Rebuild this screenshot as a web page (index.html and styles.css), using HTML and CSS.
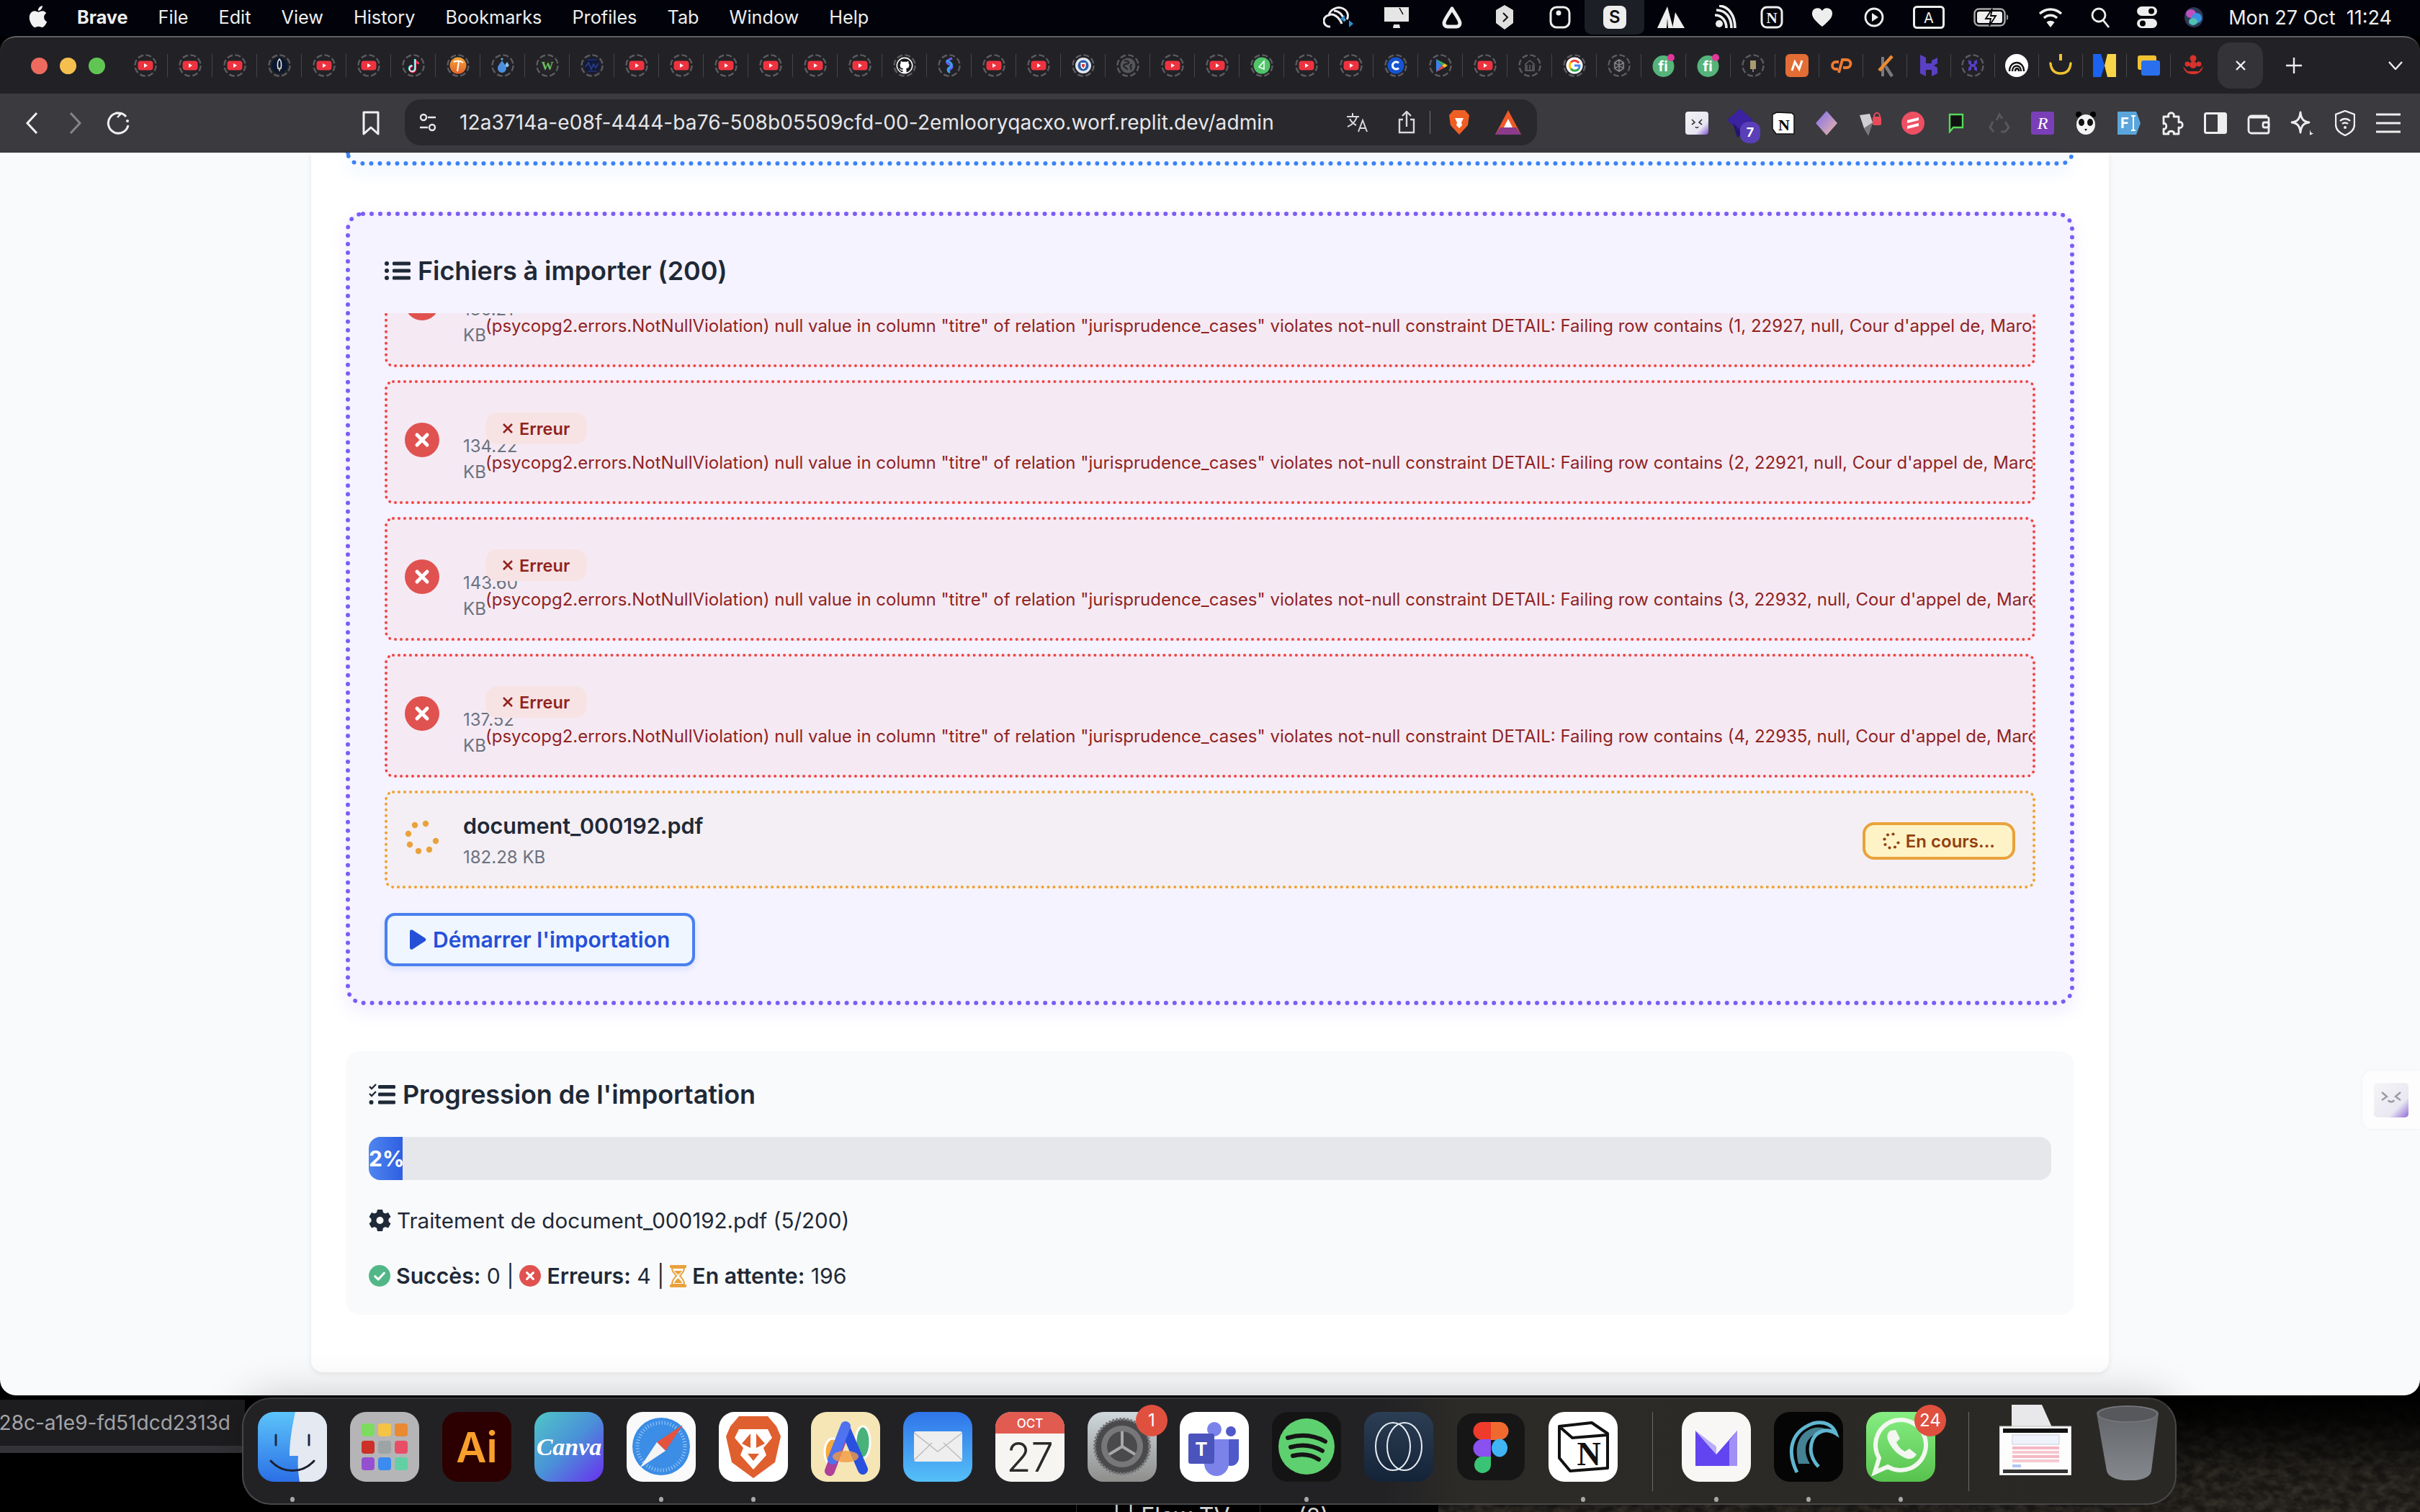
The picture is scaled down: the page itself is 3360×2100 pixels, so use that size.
FILE: index.html
```html
<!DOCTYPE html>
<html lang="fr">

<head>
    <meta charset="UTF-8">
    <title>Admin - Importation</title>
    <link rel="stylesheet" href="styles.css">
</head>

<body>
    <!-- shared icons -->
    <svg class="defs" aria-hidden="true">
        <defs>
            <linearGradient id="g-finder" x1="0" y1="0" x2="0" y2="1"><stop offset="0" stop-color="#5cc4fa"/><stop offset="1" stop-color="#2b6fe6"/></linearGradient>
            <linearGradient id="g-canva" x1="0" y1="0" x2="1" y2="1"><stop offset="0" stop-color="#4fc6c8"/><stop offset=".5" stop-color="#4a90d8"/><stop offset="1" stop-color="#6a2ff0"/></linearGradient>
            <linearGradient id="g-mail" x1="0" y1="0" x2="0" y2="1"><stop offset="0" stop-color="#2f75ea"/><stop offset="1" stop-color="#55c0f8"/></linearGradient>
            <linearGradient id="g-gear" x1="0" y1="0" x2="0" y2="1"><stop offset="0" stop-color="#cfd8dc"/><stop offset="1" stop-color="#8e8e8c"/></linearGradient>
            <linearGradient id="g-navy" x1="0" y1="0" x2="0" y2="1"><stop offset="0" stop-color="#2c3e54"/><stop offset="1" stop-color="#142338"/></linearGradient>
            <linearGradient id="g-wa" x1="0" y1="0" x2="0" y2="1"><stop offset="0" stop-color="#86ee82"/><stop offset="1" stop-color="#58c24e"/></linearGradient>
            <linearGradient id="g-tile" x1="0" y1="0" x2="1" y2="1"><stop offset="0" stop-color="#f4f4f6"/><stop offset=".7" stop-color="#e6e4f0"/><stop offset="1" stop-color="#7d4fd0"/></linearGradient>
            <linearGradient id="g-crystal" x1="0" y1="0" x2="1" y2="1"><stop offset="0" stop-color="#7b6cf2"/><stop offset="1" stop-color="#f0b8a0"/></linearGradient>
            <linearGradient id="g-trash" x1="0" y1="0" x2="0" y2="1"><stop offset="0" stop-color="#5f6266"/><stop offset="1" stop-color="#85888c"/></linearGradient>
            <linearGradient id="g-pick" x1="0" y1="0" x2="0" y2="1"><stop offset="0" stop-color="#f2a63a"/><stop offset="1" stop-color="#e4622a"/></linearGradient>
            <linearGradient id="g-fade" x1="0" y1="0" x2="0" y2="1"><stop offset="0" stop-color="#000"/><stop offset=".2" stop-color="#000" stop-opacity=".85"/><stop offset=".7" stop-color="#000" stop-opacity=".1"/><stop offset="1" stop-color="#000" stop-opacity="0"/></linearGradient>

            <filter id="rock" x="0" y="0" width="100%" height="100%" color-interpolation-filters="sRGB">
                <feTurbulence type="fractalNoise" baseFrequency=".06 .09" numOctaves="5" seed="7"/>
                <feColorMatrix values="0 0 0 0 .24  0 0 0 0 .22  0 0 0 0 .19  1.6 0 0 0 -.5"/>
            </filter>

            <symbol id="ring" viewBox="0 0 32 32"><circle cx="16" cy="16" r="14.6" fill="none" stroke="#5c5c60" stroke-width="2.4" stroke-dasharray="8 3.46"/></symbol>
            <symbol id="yt" viewBox="0 0 32 32"><rect x="5.5" y="9.5" width="21" height="13" rx="4" fill="#ee3340"/><path d="M14 13l5 3-5 3z" fill="#fff"/></symbol>
            <symbol id="rocket" viewBox="0 0 32 32"><circle cx="16" cy="16" r="11" fill="#0b1730"/><path d="M16 7c3 3 3 8 2 13h-4c-1-5-1-10 2-13z" fill="none" stroke="#e8e8e8" stroke-width="1.6"/><path d="M14.5 21h3l-1.5 4z" fill="#e0b050"/></symbol>
            <symbol id="tiktok" viewBox="0 0 32 32"><path d="M18 7v13a4 4 0 1 1-4-4M18 7c.5 3 2.5 5 5 5" fill="none" stroke="#25f4ee" stroke-width="2.4"/><path d="M19 8v13a4 4 0 1 1-4-4M19 8c.5 3 2.5 5 5 5" fill="none" stroke="#fe2c55" stroke-width="2.4"/><path d="M18.5 7.5v13a4 4 0 1 1-4-4" fill="none" stroke="#fff" stroke-width="1.4"/></symbol>
            <symbol id="pick" viewBox="0 0 32 32"><circle cx="16" cy="16" r="11.5" fill="url(#g-pick)"/><path d="M10 11c4-2 9-2 13 1M17 10l-2 14" fill="none" stroke="#fff" stroke-width="2"/></symbol>
            <symbol id="drops" viewBox="0 0 32 32"><path d="M15 9c3 5 6 7 6 11a6 6 0 0 1-12 0c0-4 3-6 6-11z" fill="#4a90e0"/><circle cx="15" cy="7" r="1.6" fill="#6aa8e8"/><path d="M22 11c1 2 2.5 3 2.5 4.5a2.5 2.5 0 0 1-5 0c0-1.5 1.500-2.500 2.500-4.500z" fill="#8cc0ee"/></symbol>
            <symbol id="wcircle" viewBox="0 0 32 32"><circle cx="16" cy="16" r="11" fill="#26262a"/><text x="16" y="22" text-anchor="middle" font-family="Liberation Serif" font-size="17" font-weight="700" fill="#6cbf5c">W</text></symbol>
            <symbol id="wave" viewBox="0 0 32 32"><circle cx="16" cy="16" r="11" fill="#121a3a"/><path d="M7 18l4-6 4 9 3-7 3 5 4-6" fill="none" stroke="#2c3f8c" stroke-width="1.6"/><path d="M10 8h12M10 24h12" stroke="#2c3f8c" stroke-width="1.2"/></symbol>
            <symbol id="octo" viewBox="-4 -4 24 24"><circle cx="8" cy="8" r="8.6" fill="#fff"/><path d="M8 .6C3.900.6.600 3.900.600 8c0 3.300 2.100 6 5 7 .4.100.5-.2.500-.4v-1.400c-2 .4-2.500-.5-2.600-.9-.1-.2-.4-.9-.8-1-.3-.2-.7-.5 0-.5.600 0 1 .5 1.200.8.700 1.100 1.700.8 2.200.6.100-.5.300-.8.500-1-1.700-.2-3.400-.8-3.400-3.700 0-.8.300-1.500.8-2-.1-.2-.3-1 .1-2 0 0 .6-.2 2 .8.600-.2 1.200-.3 1.900-.3s1.300.100 1.900.3c1.400-1 2-.8 2-.8.400 1 .2 1.800.1 2 .5.500.8 1.200.8 2 0 2.900-1.700 3.500-3.400 3.700.3.200.5.700.5 1.400v2c0 .2.100.5.500.4 2.900-1 5-3.700 5-7C15.400 3.900 12.100.6 8 .6z" fill="#1a1a1e"/></symbol>
            <symbol id="spiral" viewBox="0 0 32 32"><path d="M20 6c-8 3-10 6-3 9 5 2 3 5-3 8" fill="none" stroke="#6a5cf0" stroke-width="3.4"/><path d="M12 9c8 3 10 7 4 10-3 2-3 4 1 7" fill="none" stroke="#35a8ee" stroke-width="2.8"/></symbol>
            <symbol id="shield" viewBox="0 0 32 32"><circle cx="16" cy="16" r="11" fill="#dfe6ee"/><circle cx="16" cy="16" r="7.5" fill="#2a5ca8"/><path d="M12.500 12h7v5c0 2-2 3.500-3.500 4-1.500-.5-3.500-2-3.500-4z" fill="#fff"/><path d="M14 14h4v3l-2 2.500-2-2.500z" fill="#d83a3a"/></symbol>
            <symbol id="globe" viewBox="0 0 32 32"><circle cx="16" cy="16" r="10.5" fill="#55565a"/><path d="M11 9c2 1 5 0 6 2s-2 3-4 3-4 2-2 4 4 1 4 4M22 15c-2 0-3 1-2 3s0 4 1 4" fill="none" stroke="#28282c" stroke-width="2.4"/></symbol>
            <symbol id="greenc" viewBox="0 0 32 32"><circle cx="16" cy="16" r="11.5" fill="#4fc468"/><path d="M19 10l-7 8 7 3z" fill="none" stroke="#fff" stroke-width="1.5"/></symbol>
            <symbol id="cblue" viewBox="0 0 32 32"><circle cx="16" cy="16" r="11.5" fill="#1654d0"/><path d="M20 12.500a5 5 0 1 0 0 7" fill="none" stroke="#fff" stroke-width="3"/></symbol>
            <symbol id="gplay" viewBox="0 0 32 32"><path d="M10 7l8 9-8 9z" fill="#3b82f0"/><path d="M10 7l11.500 6-3.500 3z" fill="#38b060"/><path d="M10 25l11.500-6-3.500-3z" fill="#e04848"/><path d="M21.500 13l4.500 3-4.500 3-3.500-3z" fill="#f5c030"/></symbol>
            <symbol id="temple" viewBox="0 0 32 32"><path d="M10 23h12v-9l-6-5-6 5zM12 15v7M16 15v7M20 15v7" fill="none" stroke="#6a6a6e" stroke-width="1.3"/></symbol>
            <symbol id="goog" viewBox="0 0 32 32"><circle cx="16" cy="16" r="11.5" fill="#fff"/><path d="M22 12.500a7 7 0 0 0-11-1" fill="none" stroke="#ea4335" stroke-width="3"/><path d="M11 11.500a7 7 0 0 0 0 9" fill="none" stroke="#fbbc05" stroke-width="3"/><path d="M11 20.500a7 7 0 0 0 11 0" fill="none" stroke="#34a853" stroke-width="3"/><path d="M22 20.500c1-1.500 1.200-3 1-4.500h-7" fill="none" stroke="#4285f4" stroke-width="3"/></symbol>
            <symbol id="knot" viewBox="0 0 32 32"><circle cx="16" cy="16" r="10" fill="#2b2b2f"/><path d="M16 8l6 4v8l-6 4-6-4v-8zM10 12l12 8M22 12l-12 8M16 8v16" fill="none" stroke="#8a8a8e" stroke-width="1.5"/></symbol>
            <symbol id="fiver" viewBox="0 0 32 32"><ellipse cx="15.5" cy="17" rx="15" ry="15" fill="#55b47a"/><text x="15" y="24" text-anchor="middle" font-family="Inter" font-size="20" font-weight="700" fill="#fff">fi</text><circle cx="26" cy="5" r="5" fill="#e0389a"/></symbol>
            <symbol id="paper" viewBox="0 0 32 32"><rect x="12" y="9" width="8" height="12" fill="#a89a70"/><path d="M16 21v4" stroke="#999" stroke-width="1.5"/></symbol>
            <symbol id="norange" viewBox="0 0 32 32"><rect width="32" height="32" rx="6" fill="#e26d35"/><path d="M9 23l4-12 6 10 4-12" fill="none" stroke="#fff" stroke-width="3"/></symbol>
            <symbol id="cpanel" viewBox="0 0 32 32"><path d="M13 11H9a5 5 0 0 0 0 10h3M13 26l5-18h6a5 5 0 0 1 0 11h-5" fill="none" stroke="#ee7a32" stroke-width="3.8"/></symbol>
            <symbol id="kk" viewBox="0 0 32 32"><path d="M13 4v27" stroke="#7a7a7e" stroke-width="4"/><path d="M26 3L8 23" stroke="#ee8a32" stroke-width="4.5"/><path d="M17 17l9 14" stroke="#7a7a7e" stroke-width="4.5"/></symbol>
            <symbol id="hpurple" viewBox="0 0 32 32"><path d="M4 1l8 4v8h8V9l8-4v8l-5 3 5 3v8l-8 4v-9h-8v9l-8-4z" fill="#5a40c4"/></symbol>
            <symbol id="hsmall" viewBox="0 0 32 32"><path d="M10 8l4 2v4h4v-4l4-2v5l-3 3 3 3v5l-4-2v-4h-4v4l-4 2v-5l3-3-3-3z" fill="#5a40c4"/></symbol>
            <symbol id="whitec" viewBox="0 0 32 32"><ellipse cx="16" cy="16" rx="16" ry="16" fill="#fff"/><path d="M6 24c0-16 20-16 20 0M10 24c0-10 12-10 12 0M14 24c0-5 5-5 5 0" fill="none" stroke="#111" stroke-width="2.4"/></symbol>
            <symbol id="smile" viewBox="0 0 32 32"><path d="M2 13c1 10 6 14 14 14s13-4 14-14" fill="none" stroke="#f0c232" stroke-width="3.4" stroke-linecap="round"/><rect x="14" y="0" width="4" height="9" fill="#f0c232"/></symbol>
            <symbol id="kbrand" viewBox="0 0 32 32"><path d="M0 0h11l5 16-5 16H0z" fill="#1a62f0"/><path d="M32 0H20l-4 16 4 16h12z" fill="#f8d448"/></symbol>
            <symbol id="wins" viewBox="0 0 32 32"><rect x="1" y="2" width="26" height="20" rx="3" fill="#f0c232"/><rect x="6" y="9" width="26" height="21" rx="3" fill="#2a70ee"/></symbol>
            <symbol id="redp" viewBox="0 0 32 32"><circle cx="16" cy="6" r="4.5" fill="#d8322c"/><circle cx="8" cy="14" r="3.4" fill="#d8322c"/><circle cx="24" cy="14" r="3.4" fill="#d8322c"/><circle cx="16" cy="15" r="5" fill="#d8322c"/><path d="M2 17c2 9 8 11 14 11s12-2 14-11l-6 7H8z" fill="#d8322c"/></symbol>

            <symbol id="spin" viewBox="0 0 48 48"><circle cx="14" cy="7" r="4.2"/><circle cx="29" cy="5" r="4.2"/><circle cx="5" cy="19" r="4.2"/><circle cx="43" cy="29" r="4.2"/><circle cx="7" cy="34" r="4.2"/><circle cx="19" cy="43" r="4.2"/><circle cx="34" cy="41" r="4.2"/></symbol>
            <symbol id="circle-x" viewBox="0 0 48 48"><circle cx="24" cy="24" r="24" fill="#e05250"/><path d="M17 17l14 14M31 17L17 31" stroke="#fff" stroke-width="5" stroke-linecap="round"/></symbol>
            <symbol id="circle-ok" viewBox="0 0 48 48"><circle cx="24" cy="24" r="24" fill="#52b788"/><path d="M14 25l7 7 13-14" fill="none" stroke="#fff" stroke-width="5" stroke-linecap="round" stroke-linejoin="round"/></symbol>
        </defs>
    </svg>

    <header class="menubar">
        <svg class="apple" viewBox="0 0 24 24" fill="#f2f2f2"><path d="M18.71 19.5c-.83 1.24-1.71 2.45-3.05 2.47-1.34.03-1.77-.79-3.29-.79-1.53 0-2 .77-3.27.82-1.31.05-2.3-1.32-3.14-2.53C4.25 17 2.94 12.45 4.7 9.39c.87-1.52 2.43-2.48 4.12-2.51 1.28-.02 2.5.87 3.29.87.78 0 2.26-1.07 3.81-.91.65.03 2.47.26 3.64 1.98-.09.06-2.17 1.28-2.15 3.81.03 3.02 2.65 4.03 2.68 4.04-.03.07-.42 1.44-1.38 2.83M13 3.5c.73-.83 1.94-1.46 2.94-1.5.13 1.17-.34 2.35-1.04 3.19-.69.85-1.83 1.51-2.95 1.42-.15-1.15.41-2.35 1.05-3.11z"/></svg>
        <nav class="menus">
            <span class="app-name">Brave</span>
            <span>File</span><span>Edit</span><span>View</span><span>History</span><span>Bookmarks</span><span>Profiles</span><span>Tab</span><span>Window</span><span>Help</span>
        </nav>
        <div class="status">
            <svg width="44" height="34" viewBox="0 0 44 34" fill="none" stroke="#eee" stroke-width="3"><path d="M10 30a8 8 0 0 1-2-16C10 6 20 1 28 5s7 12 5 15"/><path d="M8 14c6-3 14 2 18 12M15 8c8 0 13 7 15 14"/><path d="M30 14l-6 5 6 5z" fill="#2a90d0" stroke="none"/><path d="M36 21l6 5-6 5z" fill="#2a90d0" stroke="none"/></svg>
            <svg width="36" height="32" viewBox="0 0 36 32"><path d="M1 2h34v20H1z" fill="#e6e6e6"/><path d="M14 26h8l1 5H13z" fill="#e6e6e6"/><path d="M22 3l5 9" stroke="#000" stroke-width="1.5"/></svg>
            <svg class="g44" width="30" height="32" viewBox="0 0 30 32" fill="none" stroke="#eee" stroke-width="5"><path d="M15 4C9 14 4 20 4 24c0 3 2 5 5 5h12c3 0 5-2 5-5 0-4-5-10-11-20z" stroke-linejoin="round"/></svg>
            <svg class="g44" width="28" height="36" viewBox="0 0 28 36"><path d="M14 1l12 7v18l-12 9-12-9V8z" fill="#e0e0e0"/><path d="M12 12l6 6-6 6" fill="none" stroke="#111" stroke-width="2"/></svg>
            <svg class="g48" width="30" height="32" viewBox="0 0 30 32"><rect x="2" y="2" width="26" height="28" rx="8" fill="none" stroke="#eee" stroke-width="3"/><circle cx="13" cy="10" r="3.5" fill="#eee"/></svg>
            <div class="status-tile"><span class="s-logo">S</span></div>
            <svg class="g18" width="38" height="30" viewBox="0 0 38 30" fill="#eee"><path d="M14 0l8 30H0z"/><path d="M25 8l13 22H21z"/><path d="M14 16l-1 14h2z" fill="#000"/></svg>
            <svg width="32" height="34" viewBox="0 0 32 34" fill="none" stroke="#eee" stroke-width="3.6"><circle cx="8" cy="26" r="5" fill="#eee" stroke="none"/><path d="M2 14c9 0 16 7 16 18M4 7c13 0 21 10 21 25M8 1c13 1 22 13 22 31"/></svg>
            <svg class="g33" width="32" height="32" viewBox="0 0 32 32"><rect x="2" y="2" width="28" height="28" rx="7" fill="none" stroke="#eee" stroke-width="3"/><text x="16" y="24" text-anchor="middle" font-family="Liberation Serif" font-size="21" font-weight="700" fill="#eee">N</text></svg>
            <svg width="28" height="26" viewBox="0 0 28 26"><path d="M14 26C4 18 0 13 0 8a7.500 7.500 0 0 1 14-4 7.500 7.500 0 0 1 14 4c0 5-4 10-14 18z" fill="#eee"/></svg>
            <svg class="g44" width="28" height="28" viewBox="0 0 28 28"><circle cx="14" cy="14" r="12" fill="none" stroke="#eee" stroke-width="2.8"/><path d="M11 8l9 6-9 6z" fill="#eee"/></svg>
            <svg width="44" height="32" viewBox="0 0 44 32"><rect x="1.5" y="1.5" width="41" height="29" rx="4" fill="none" stroke="#eee" stroke-width="3"/><text x="22" y="24" text-anchor="middle" font-family="Inter" font-size="20" fill="#eee">A</text></svg>
            <svg width="50" height="26" viewBox="0 0 50 26"><rect x="1.5" y="1.5" width="42" height="23" rx="6" fill="none" stroke="#aaa" stroke-width="2.4"/><rect x="5" y="5" width="35" height="16" rx="3" fill="#eee"/><path d="M46 9c3 1 3 7 0 8z" fill="#999"/><path d="M26 1l-9 14h7l-2 10 9-14h-7z" fill="#eee" stroke="#000" stroke-width="1.8"/></svg>
            <svg width="34" height="28" viewBox="0 0 34 28" fill="none" stroke="#eee" stroke-width="3.4"><path d="M2 9c9-8 21-8 30 0M8 15c5-5 13-5 18 0"/><path d="M17 28l-5.500-7c3-3 8-3 11 0z" fill="#eee" stroke="none"/></svg>
            <svg class="g39" width="26" height="30" viewBox="0 0 26 30" fill="none" stroke="#eee" stroke-width="2.8"><circle cx="11" cy="12" r="9"/><path d="M17 19l8 10"/></svg>
            <svg class="g38" width="28" height="30" viewBox="0 0 28 30"><rect width="28" height="13" rx="6.5" fill="#eee"/><circle cx="20" cy="6.5" r="4" fill="#000"/><rect y="17" width="28" height="13" rx="6.5" fill="#eee"/><circle cx="8" cy="23.5" r="4" fill="#000"/></svg>
            <svg class="g37" width="28" height="30" viewBox="0 0 28 30"><ellipse cx="14" cy="15" rx="13" ry="14" fill="#2d3a58"/><ellipse cx="10" cy="10" rx="7" ry="6" fill="#c050c0"/><ellipse cx="18" cy="16" rx="7" ry="7" fill="#3a90e0"/><ellipse cx="13" cy="21" rx="6" ry="5" fill="#50c0b0"/></svg>
            <time class="clock">Mon 27 Oct&nbsp;&nbsp;11:24</time>
        </div>
    </header>

    <div class="window">
        <div class="tabstrip">
            <div class="traffic"><i class="red"></i><i class="amber"></i><i class="green"></i></div>
            <div class="tabs">
                <div class="tab"><svg><use href="#ring"/><use href="#yt"/></svg></div>
                <div class="tab"><svg><use href="#ring"/><use href="#yt"/></svg></div>
                <div class="tab"><svg><use href="#ring"/><use href="#yt"/></svg></div>
                <div class="tab"><svg><use href="#ring"/><use href="#rocket"/></svg></div>
                <div class="tab"><svg><use href="#ring"/><use href="#yt"/></svg></div>
                <div class="tab"><svg><use href="#ring"/><use href="#yt"/></svg></div>
                <div class="tab"><svg><use href="#ring"/><use href="#tiktok"/></svg></div>
                <div class="tab"><svg><use href="#ring"/><use href="#pick"/></svg></div>
                <div class="tab"><svg><use href="#ring"/><use href="#drops"/></svg></div>
                <div class="tab"><svg><use href="#ring"/><use href="#wcircle"/></svg></div>
                <div class="tab"><svg><use href="#ring"/><use href="#wave"/></svg></div>
                <div class="tab"><svg><use href="#ring"/><use href="#yt"/></svg></div>
                <div class="tab"><svg><use href="#ring"/><use href="#yt"/></svg></div>
                <div class="tab"><svg><use href="#ring"/><use href="#yt"/></svg></div>
                <div class="tab"><svg><use href="#ring"/><use href="#yt"/></svg></div>
                <div class="tab"><svg><use href="#ring"/><use href="#yt"/></svg></div>
                <div class="tab"><svg><use href="#ring"/><use href="#yt"/></svg></div>
                <div class="tab"><svg><use href="#ring"/><use href="#octo"/></svg></div>
                <div class="tab"><svg><use href="#ring"/><use href="#spiral"/></svg></div>
                <div class="tab"><svg><use href="#ring"/><use href="#yt"/></svg></div>
                <div class="tab"><svg><use href="#ring"/><use href="#yt"/></svg></div>
                <div class="tab"><svg><use href="#ring"/><use href="#shield"/></svg></div>
                <div class="tab"><svg><use href="#ring"/><use href="#globe"/></svg></div>
                <div class="tab"><svg><use href="#ring"/><use href="#yt"/></svg></div>
                <div class="tab"><svg><use href="#ring"/><use href="#yt"/></svg></div>
                <div class="tab"><svg><use href="#ring"/><use href="#greenc"/></svg></div>
                <div class="tab"><svg><use href="#ring"/><use href="#yt"/></svg></div>
                <div class="tab"><svg><use href="#ring"/><use href="#yt"/></svg></div>
                <div class="tab"><svg><use href="#ring"/><use href="#cblue"/></svg></div>
                <div class="tab"><svg><use href="#ring"/><use href="#gplay"/></svg></div>
                <div class="tab"><svg><use href="#ring"/><use href="#yt"/></svg></div>
                <div class="tab"><svg><use href="#ring"/><use href="#temple"/></svg></div>
                <div class="tab"><svg><use href="#ring"/><use href="#goog"/></svg></div>
                <div class="tab"><svg><use href="#ring"/><use href="#knot"/></svg></div>
                <div class="tab"><svg><use href="#fiver"/></svg></div>
                <div class="tab"><svg><use href="#fiver"/></svg></div>
                <div class="tab"><svg><use href="#ring"/><use href="#paper"/></svg></div>
                <div class="tab narrow"><svg><use href="#norange"/></svg></div>
                <div class="tab narrow"><svg><use href="#cpanel"/></svg></div>
                <div class="tab narrow"><svg><use href="#kk"/></svg></div>
                <div class="tab narrow"><svg><use href="#hpurple"/></svg></div>
                <div class="tab narrow"><svg><use href="#ring"/><use href="#hsmall"/></svg></div>
                <div class="tab narrow"><svg><use href="#whitec"/></svg></div>
                <div class="tab narrow"><svg><use href="#smile"/></svg></div>
                <div class="tab narrow"><svg><use href="#kbrand"/></svg></div>
                <div class="tab narrow"><svg><use href="#wins"/></svg></div>
                <div class="tab narrow last"><svg><use href="#redp"/></svg></div>
            </div>
            <div class="tab-active"><svg width="16" height="16" viewBox="0 0 16 16"><path d="M2 2l12 12M14 2L2 14" stroke="#f2f2f2" stroke-width="2.4"/></svg></div>
            <svg class="tab-plus" width="22" height="22" viewBox="0 0 22 22"><path d="M11 0v22M0 11h22" stroke="#eee" stroke-width="2.4"/></svg>
            <svg class="tab-more" width="20" height="12" viewBox="0 0 20 12"><path d="M1 1l9 10 9-10" fill="none" stroke="#eee" stroke-width="2.4"/></svg>
        </div>

        <div class="toolbar">
            <svg class="nav-back" width="18" height="32" viewBox="0 0 18 32"><path d="M16 2L3 16l13 14" fill="none" stroke="#f0f0f0" stroke-width="3"/></svg>
            <svg class="nav-fwd" width="18" height="32" viewBox="0 0 18 32"><path d="M2 2l13 14L2 30" fill="none" stroke="#85858a" stroke-width="3"/></svg>
            <svg class="nav-reload" width="34" height="34" viewBox="0 0 34 34" fill="none" stroke="#f0f0f0" stroke-width="3"><path d="M28 8a14 14 0 1 0 3 12"/><circle cx="30" cy="14" r="2" fill="#f0f0f0" stroke="none"/><path d="M14 2l6 3-4 4" stroke-width="2.4"/></svg>
            <svg class="nav-mark" width="24" height="34" viewBox="0 0 24 34"><path d="M2 2h20v30l-10-9-10 9z" fill="none" stroke="#f0f0f0" stroke-width="3" stroke-linejoin="round"/></svg>
            <div class="urlbar">
                <svg class="tune" width="24" height="26" viewBox="0 0 24 26" fill="none" stroke="#e8e8ea" stroke-width="2.4"><circle cx="6" cy="6" r="4"/><path d="M12 6h11M1 20h11"/><circle cx="18" cy="20" r="4"/></svg>
                <span class="url">12a3714a-e08f-4444-ba76-508b05509cfd-00-2emlooryqacxo.worf.replit.dev/admin</span>
                <svg class="url-tr" width="32" height="28" viewBox="0 0 32 28" fill="none" stroke="#d8d8da" stroke-width="2"><path d="M1 6h17M9 1v5M15 6c-2 7-6 11-13 14M5 9c2 4 5 7 9 9"/><path d="M17 27l6-16 6 16M19 22h8"/></svg>
                <svg class="url-share" width="24" height="32" viewBox="0 0 24 32" fill="none" stroke="#d8d8da" stroke-width="2.4"><path d="M7 12H2v18h20V12h-5M12 22V2M6 7l6-6 6 6"/></svg>
                <i class="url-sep"></i>
                <svg class="url-brave" width="32" height="36" viewBox="0 0 32 36"><path d="M8 1h16l6 7-2 14-12 13L4 22 2 8z" fill="#ef5f24"/><path d="M10 12h12l-3 6 1 4-4 4-4-4 1-4z" fill="#fff"/></svg>
                <svg class="url-tri" width="36" height="34" viewBox="0 0 36 34"><path d="M18 0l18 34H0z" fill="#f05a28"/><path d="M18 12l6 12H12z" fill="#fff"/><path d="M0 34l7-10h22l7 10z" fill="#8b3a8c"/></svg>
            </div>
            <div class="extensions">
                <div class="ext"><svg width="32" height="32" viewBox="0 0 32 32"><rect width="32" height="32" rx="4" fill="url(#g-tile)"/><path d="M9 11l4 4-4 3M23 11l-4 4 4 3M14 21c1 2 3 2 4 0" fill="none" stroke="#333" stroke-width="1.6"/></svg></div>
                <div class="ext ext-badged"><svg width="36" height="40" viewBox="0 0 36 40"><path d="M18 0l18 16-18 16L0 16z" fill="#3a22a0"/><path d="M8 20l14 14-8 6z" fill="#241470"/></svg><span class="ext-count">7</span></div>
                <div class="ext"><svg width="32" height="32" viewBox="0 0 32 32"><path d="M7 1l21 1 3 3v26H6l-5-7V4z" fill="#fff" stroke="#111" stroke-width="1.5"/><text x="17" y="26" text-anchor="middle" font-family="Liberation Serif" font-size="22" font-weight="700">N</text></svg></div>
                <div class="ext"><svg width="30" height="34" viewBox="0 0 30 34"><path d="M15 0l15 17-15 17L0 17z" fill="url(#g-crystal)"/></svg></div>
                <div class="ext"><svg width="32" height="34" viewBox="0 0 32 34"><path d="M2 6l14-2 4 12-6 18-6-10z" fill="#cfcfd2"/><path d="M8 24l6 10 6-18z" fill="#77777b"/><rect x="20" y="8" width="12" height="12" rx="2" fill="#e84a5a"/><path d="M22 8c0-7 8-7 8 0" fill="none" stroke="#e84a5a" stroke-width="2"/></svg></div>
                <div class="ext"><svg width="32" height="32" viewBox="0 0 32 32"><circle cx="16" cy="16" r="16" fill="#ee4f62"/><path d="M8 12l16-4v4L8 16zM8 20l16-4v4L8 24z" fill="#fff"/></svg></div>
                <div class="ext"><svg width="22" height="28" viewBox="0 0 22 28"><path d="M2 2h18v18H7l-5 6z" fill="#111" stroke="#58d858" stroke-width="2.4"/></svg></div>
                <div class="ext"><svg width="32" height="32" viewBox="0 0 32 32" fill="none" stroke="#58585c" stroke-width="3"><path d="M12 12l4-8 4 6M24 14l5 8-5 6h-6M8 28l-5-6 4-8"/></svg></div>
                <div class="ext"><svg width="32" height="32" viewBox="0 0 32 32"><rect width="32" height="32" rx="3" fill="#7a3fb8"/><text x="16" y="24" text-anchor="middle" font-family="Liberation Serif" font-style="italic" font-size="24" fill="#fff">R</text></svg></div>
                <div class="ext"><svg width="28" height="32" viewBox="0 0 28 32"><circle cx="4" cy="4" r="4" fill="#000"/><circle cx="24" cy="4" r="4" fill="#000"/><ellipse cx="14" cy="18" rx="13" ry="14" fill="#f4f4f4"/><ellipse cx="8" cy="15" rx="4" ry="5" fill="#111"/><ellipse cx="20" cy="15" rx="4" ry="5" fill="#111"/><path d="M12 24h4l-2 3z" fill="#111"/></svg></div>
                <div class="ext"><svg width="32" height="32" viewBox="0 0 32 32"><path d="M0 0h26l6 16-6 16H0z" fill="#5aa5dc"/><text x="4" y="23" font-family="Inter" font-size="20" font-weight="700" fill="#fff">F</text><path d="M19 6h6M22 6v20M19 26h6" stroke="#fff" stroke-width="2"/></svg></div>
                <div class="ext"><svg width="32" height="34" viewBox="0 0 32 34" fill="none" stroke="#eee" stroke-width="2.8"><path d="M4 8h7c-3-7 10-7 7 0h7v8c7-3 7 10 0 7v9h-7c3-5-10-5-7 0H4v-7c5 2 5-10 0-7z" stroke-linejoin="round"/></svg></div>
                <div class="ext"><svg width="32" height="30" viewBox="0 0 32 30"><rect x="1.5" y="1.5" width="29" height="27" rx="2" fill="none" stroke="#eee" stroke-width="3"/><rect x="19" y="1" width="12" height="28" fill="#eee"/></svg></div>
                <div class="ext"><svg width="32" height="32" viewBox="0 0 32 32" fill="none" stroke="#eee" stroke-width="2.8"><path d="M28 6H6a4 4 0 0 0-4 4v16a4 4 0 0 0 4 4h22a2 2 0 0 0 2-2V10a2 2 0 0 0-2-2H4"/><rect x="22" y="15" width="8" height="7" rx="2"/></svg></div>
                <div class="ext"><svg width="32" height="34" viewBox="0 0 32 34" fill="none" stroke="#eee" stroke-width="2.8"><path d="M14 2c1 9 4 13 12 14-8 1-11 5-12 14-1-9-4-13-12-14 8-1 11-5 12-14z" stroke-linejoin="round"/><path d="M27 26l1.500 4 3.500 1.500-3.500 1.500-1.500 1z" fill="#eee" stroke="none"/></svg></div>
                <div class="ext"><svg width="28" height="36" viewBox="0 0 28 36" fill="none" stroke="#eee" stroke-width="2.4"><path d="M14 1l13 5v14c0 7-6 12-13 15C7 32 1 27 1 20V6z"/><path d="M7 15c4-4 10-4 14 0M10 19c2-2 6-2 8 0" /><circle cx="14" cy="24" r="2" fill="#eee" stroke="none"/></svg></div>
                <div class="ext"><svg width="34" height="30" viewBox="0 0 34 30"><path d="M0 3h34M0 15h34M0 27h34" stroke="#eee" stroke-width="3.2"/></svg></div>
            </div>
        </div>

        <main class="page">
            <div class="card">
                <div class="upload-stub"></div>

                <section class="files">
                    <h3 class="section-title">
                        <svg width="36" height="28" viewBox="0 0 36 28" fill="#1f2937"><circle cx="3" cy="4" r="3"/><circle cx="3" cy="14" r="3"/><circle cx="3" cy="24" r="3"/><rect x="11" y="1.5" width="25" height="5" rx="1.5"/><rect x="11" y="11.5" width="25" height="5" rx="1.5"/><rect x="11" y="21.5" width="25" height="5" rx="1.5"/></svg>
                        Fichiers à importer (200)
                    </h3>

                    <div class="file-list">
                        <div class="file-item is-error">
                            <svg class="file-icon"><use href="#circle-x"/></svg>
                            <div class="file-info"><div class="file-name"></div><div class="file-size">136.21 KB</div></div>
                            <div class="file-body">
                                <span class="pill-error"><svg width="14" height="14" viewBox="0 0 14 14"><path d="M1 1l12 12M13 1L1 13" stroke="#90231f" stroke-width="2.6"/></svg> Erreur</span>
                                <div class="file-msg">(psycopg2.errors.NotNullViolation) null value in column "titre" of relation "jurisprudence_cases" violates not-null constraint DETAIL: Failing row contains (1, 22927, null, Cour d'appel de, Maroc, 2021, arrêt, null)</div>
                            </div>
                        </div>
                        <div class="file-item is-error">
                            <svg class="file-icon"><use href="#circle-x"/></svg>
                            <div class="file-info"><div class="file-name"></div><div class="file-size">134.22 KB</div></div>
                            <div class="file-body">
                                <span class="pill-error"><svg width="14" height="14" viewBox="0 0 14 14"><path d="M1 1l12 12M13 1L1 13" stroke="#90231f" stroke-width="2.6"/></svg> Erreur</span>
                                <div class="file-msg">(psycopg2.errors.NotNullViolation) null value in column "titre" of relation "jurisprudence_cases" violates not-null constraint DETAIL: Failing row contains (2, 22921, null, Cour d'appel de, Maroc, 2021, arrêt, null)</div>
                            </div>
                        </div>
                        <div class="file-item is-error">
                            <svg class="file-icon"><use href="#circle-x"/></svg>
                            <div class="file-info"><div class="file-name"></div><div class="file-size">143.60 KB</div></div>
                            <div class="file-body">
                                <span class="pill-error"><svg width="14" height="14" viewBox="0 0 14 14"><path d="M1 1l12 12M13 1L1 13" stroke="#90231f" stroke-width="2.6"/></svg> Erreur</span>
                                <div class="file-msg">(psycopg2.errors.NotNullViolation) null value in column "titre" of relation "jurisprudence_cases" violates not-null constraint DETAIL: Failing row contains (3, 22932, null, Cour d'appel de, Maroc, 2021, arrêt, null)</div>
                            </div>
                        </div>
                        <div class="file-item is-error">
                            <svg class="file-icon"><use href="#circle-x"/></svg>
                            <div class="file-info"><div class="file-name"></div><div class="file-size">137.52 KB</div></div>
                            <div class="file-body">
                                <span class="pill-error"><svg width="14" height="14" viewBox="0 0 14 14"><path d="M1 1l12 12M13 1L1 13" stroke="#90231f" stroke-width="2.6"/></svg> Erreur</span>
                                <div class="file-msg">(psycopg2.errors.NotNullViolation) null value in column "titre" of relation "jurisprudence_cases" violates not-null constraint DETAIL: Failing row contains (4, 22935, null, Cour d'appel de, Maroc, 2021, arrêt, null)</div>
                            </div>
                        </div>
                        <div class="file-item is-running">
                            <svg class="file-icon spinner"><use href="#spin"/></svg>
                            <div class="file-running">
                                <div class="running-name">document_000192.pdf</div>
                                <div class="running-size">182.28 KB</div>
                            </div>
                            <span class="pill-running"><svg width="24" height="24"><use href="#spin"/></svg>En cours...</span>
                        </div>
                    </div>

                    <button class="start-btn" type="button">
                        <svg width="23" height="28" viewBox="0 0 23 28"><path d="M0 3c0-2.500 2-3.500 4-2.300l17 11c1.800 1.100 1.800 3.500 0 4.600l-17 11C2 28.500 0 27.500 0 25z" fill="#2450d8"/></svg>
                        Démarrer l'importation
                    </button>
                </section>

                <section class="progress-box">
                    <h3 class="section-title">
                        <svg width="37" height="30" viewBox="0 0 37 30" fill="#1f2937"><path d="M1 4l3 3 6-6M1 14l3 3 6-6" fill="none" stroke="#1f2937" stroke-width="2.4"/><circle cx="3.5" cy="26" r="3"/><rect x="13" y="2" width="24" height="5" rx="1.5"/><rect x="13" y="12.5" width="24" height="5" rx="1.5"/><rect x="13" y="23.5" width="24" height="5" rx="1.5"/></svg>
                        Progression de l'importation
                    </h3>
                    <div class="bar"><div class="bar-fill">2%</div></div>
                    <p class="progress-line">
                        <svg width="31" height="30" viewBox="0 0 31 30"><path d="M12 0h7l1 4 3 1.500 4-1.500 3.500 6-3 3v3.500l3 3L27 25.500l-4-1.500-3 1.500-1 4.500h-7l-1-4.500L8 24l-4 1.500L.5 19.500l3-3V13l-3-3L4 4l4 1.500L11 4z" fill="#1f2937"/><circle cx="15.5" cy="15" r="5" fill="#f9fafb"/></svg>
                        Traitement de document_000192.pdf (5/200)
                    </p>
                    <p class="progress-line stats">
                        <svg width="30" height="30"><use href="#circle-ok"/></svg>
                        <span><b>Succès:</b> 0 |</span>
                        <svg width="30" height="30"><use href="#circle-x"/></svg>
                        <span><b>Erreurs:</b> 4 |</span>
                        <svg width="23" height="31" viewBox="0 0 23 31" fill="#e9a23b"><rect width="23" height="4" rx="1"/><rect y="27" width="23" height="4" rx="1"/><path d="M3 4h17c0 6-4 8-6 11 2 3 6 5 6 12H3c0-7 4-9 6-12C7 12 3 10 3 4z" fill="none" stroke="#e9a23b" stroke-width="2"/><path d="M6 25c1-3 4-5 5.500-7 1.500 2 4.500 4 5.500 7zM6 8h11c-1 2-4 4-5.500 5.500C10 12 7 10 6 8z"/></svg>
                        <span><b>En attente:</b> 196</span>
                    </p>
                </section>
            </div>

            <div class="side-widget"><svg width="48" height="48" viewBox="0 0 48 48"><rect width="48" height="48" rx="5" fill="url(#g-tile)" opacity=".85"/><path d="M11 13l7 6-7 5M37 13l-7 6 7 5M20 24c1 3 7 3 8 0" fill="none" stroke="#9a9ca2" stroke-width="2.4"/></svg></div>
        </main>
    </div>

    <!-- other window and wallpaper showing below the browser -->
    <div class="behind"><span>28c-a1e9-fd51dcd2313d</span></div>
    <svg class="wallpaper"><rect width="100%" height="100%" fill="#1b1916"/><rect width="100%" height="100%" filter="url(#rock)"/><rect width="100%" height="100%" fill="url(#g-fade)"/></svg>
    <div class="flow-row"><div class="flow-cell">| | Flow TV</div><span>(2)</span><i></i></div>

    <footer class="dock">
        <div class="app"><svg viewBox="0 0 96 97"><rect width="96" height="97" rx="22" fill="url(#g-finder)"/><path d="M52 0h22a22 22 0 0 1 22 22v53a22 22 0 0 1-22 22H58c-2-12-3-24-2-36H44C44 40 48 18 52 0z" fill="#e4e9f2"/><path d="M25 32v14M71 32v14" stroke="#1b2a44" stroke-width="3" stroke-linecap="round"/><path d="M18 68c16 18 44 18 60 0" fill="none" stroke="#1b2030" stroke-width="3" stroke-linecap="round"/></svg><i class="dot"></i></div>
        <div class="app"><svg viewBox="0 0 96 97"><rect width="96" height="97" rx="22" fill="#b5b5b7"/><rect x="16" y="16" width="18" height="18" rx="4" fill="#7ddc60"/><rect x="39" y="16" width="18" height="18" rx="4" fill="#f6c444"/><rect x="62" y="16" width="18" height="18" rx="4" fill="#e98a30"/><rect x="16" y="40" width="18" height="18" rx="4" fill="#cc3026"/><rect x="39" y="40" width="18" height="18" rx="4" fill="#9ea3a6"/><rect x="62" y="40" width="18" height="18" rx="4" fill="#e84e66"/><rect x="16" y="63" width="18" height="18" rx="4" fill="#9450d0"/><rect x="39" y="63" width="18" height="18" rx="4" fill="#3a8cf0"/><rect x="62" y="63" width="18" height="18" rx="4" fill="#62cfa4"/></svg></div>
        <div class="app"><svg viewBox="0 0 96 97"><rect width="96" height="97" rx="22" fill="#2c0000"/><text x="48" y="70" text-anchor="middle" font-family="Inter" font-size="58" font-weight="600" fill="#f99f2c">Ai</text></svg></div>
        <div class="app"><svg viewBox="0 0 96 97"><rect width="96" height="97" rx="22" fill="url(#g-canva)"/><text x="48" y="60" text-anchor="middle" font-family="Liberation Serif" font-style="italic" font-size="34" font-weight="700" fill="#fff">Canva</text></svg></div>
        <div class="app"><svg viewBox="0 0 96 97"><rect width="96" height="97" rx="22" fill="#fafafa"/><circle cx="48" cy="48" r="40" fill="#3b8de6"/><circle cx="48" cy="48" r="33" fill="none" stroke="#a8d0f4" stroke-width="5" stroke-dasharray="1 3"/><path d="M78 18L54 54 42 42z" fill="#e5533d"/><path d="M18 78l36-24-12-12z" fill="#f4f4f4"/></svg><i class="dot"></i></div>
        <div class="app"><svg viewBox="0 0 96 97"><rect width="96" height="97" rx="22" fill="#fff"/><path d="M28 6h40l12 14 6 14-8 36-30 22-30-22-8-36 6-14z" fill="#df5f2e"/><path d="M28 24h40l6 12-12 14 4 10-18 20-18-20 4-10-12-14z" fill="#fff"/><path d="M44 30v20l-12-6zM52 30v20l12-6z" fill="#df5f2e"/><path d="M40 58h16l-8 10z" fill="#df5f2e"/></svg><i class="dot"></i></div>
        <div class="app"><svg viewBox="0 0 96 97"><rect width="96" height="97" rx="22" fill="#f6e6b6"/><ellipse cx="30" cy="56" rx="11" ry="19" fill="#f6a93a" stroke="#fff" stroke-width="3"/><ellipse cx="72" cy="42" rx="10" ry="22" fill="#48b27a" stroke="#fff" stroke-width="3"/><path d="M48 24L26 82" stroke="#b04098" stroke-width="14" stroke-linecap="round"/><path d="M48 24l24 56" stroke="#2a50e0" stroke-width="14" stroke-linecap="round"/><path d="M48 20L30 66" stroke="#4f72f0" stroke-width="14" stroke-linecap="round"/><ellipse cx="48" cy="62" rx="18" ry="8" fill="#f29a40" opacity=".8"/></svg></div>
        <div class="app"><svg viewBox="0 0 96 97"><rect width="96" height="97" rx="22" fill="url(#g-mail)"/><rect x="15" y="27" width="67" height="42" rx="3" fill="#eeeeef"/><path d="M15 29l33 26 34-26M15 67l25-24M82 67L56 43" fill="none" stroke="#bdbdc0" stroke-width="1.5"/></svg></div>
        <div class="app"><svg viewBox="0 0 96 97"><rect width="96" height="97" rx="22" fill="#f6f5f2"/><path d="M0 30V22A22 22 0 0 1 22 0h52a22 22 0 0 1 22 22v8z" fill="#e25b50"/><text x="48" y="22" text-anchor="middle" font-family="Inter" font-size="17" font-weight="500" fill="#fff">OCT</text><text x="48" y="83" text-anchor="middle" font-family="Inter" font-size="56" font-weight="300" fill="#2a2a2a">27</text></svg></div>
        <div class="app"><svg viewBox="0 0 96 97"><rect width="96" height="97" rx="22" fill="url(#g-gear)"/><circle cx="48" cy="48" r="38" fill="#4a4a4c" stroke="#77777a" stroke-width="4" stroke-dasharray="3 2"/><circle cx="48" cy="48" r="29" fill="#777779"/><circle cx="48" cy="48" r="21" fill="#4a4a4c"/><path d="M48 48V27M48 48L30 59M48 48l18 11" stroke="#a8a8aa" stroke-width="4"/></svg><b class="badge">1</b></div>
        <div class="app"><svg viewBox="0 0 96 97"><rect width="96" height="97" rx="22" fill="#fff"/><circle cx="48" cy="24" r="10" fill="#7b83eb"/><circle cx="71" cy="27" r="7" fill="#5059c9"/><path d="M60 38h22v26a11 11 0 0 1-22 0z" fill="#5059c9"/><path d="M34 38h34v34a17 17 0 0 1-34 0z" fill="#7b83eb"/><rect x="12" y="30" width="36" height="42" rx="3" fill="#4b53bc"/><text x="30" y="61" text-anchor="middle" font-family="Inter" font-size="26" font-weight="700" fill="#fff">T</text></svg></div>
        <div class="app"><svg viewBox="0 0 96 97"><rect width="96" height="97" rx="22" fill="#141414"/><ellipse cx="48" cy="48" rx="39" ry="39" fill="#5fd070"/><path d="M22 36c17-5 36-4 52 5M26 49c14-4 30-3 44 5M29 61c12-3 25-2 36 5" fill="none" stroke="#151515" stroke-width="6" stroke-linecap="round"/></svg><i class="dot"></i></div>
        <div class="app"><svg viewBox="0 0 96 97"><rect width="96" height="97" rx="22" fill="url(#g-navy)"/><ellipse cx="40" cy="48" rx="24" ry="33" fill="none" stroke="#e8eef4" stroke-width="2"/><ellipse cx="56" cy="48" rx="24" ry="33" fill="none" stroke="#e8eef4" stroke-width="2"/></svg></div>
        <div class="app"><svg viewBox="0 0 96 97"><rect x="1" y="2" width="94" height="93" rx="22" fill="#161616"/><path d="M48 14H36a11.500 11.500 0 0 0 0 25h12z" fill="#ee3b2c"/><path d="M48 14h12a11.500 11.500 0 0 1 0 25H48z" fill="#f06a30"/><path d="M48 38H36a11.500 11.500 0 0 0 0 25h12z" fill="#8a50f0"/><ellipse cx="60" cy="50" rx="11" ry="12.5" fill="#40b4f5"/><path d="M48 62H36a11.500 11.500 0 1 0 12 12z" fill="#38c474"/></svg></div>
        <div class="app"><svg viewBox="0 0 96 97"><rect width="96" height="97" rx="22" fill="#fff"/><path d="M15 20l45-5 22 15v48l-52 4-15-18z" fill="#fff" stroke="#111" stroke-width="4" stroke-linejoin="round"/><path d="M17 22l16 14 49-4" fill="none" stroke="#111" stroke-width="4"/><text x="56" y="74" text-anchor="middle" font-family="Liberation Serif" font-size="46" font-weight="700" fill="#111">N</text></svg><i class="dot"></i></div>
        <i class="dock-sep first"></i>
        <div class="app"><svg viewBox="0 0 96 97"><rect width="96" height="97" rx="24" fill="#f8f7f5"/><path d="M19 26l29 33 29-33v49H19z" fill="#6244f0"/><path d="M19 26l29 33V48z" fill="#b8aef8"/><path d="M77 26v49H66V40z" fill="#a090f8"/></svg><i class="dot"></i></div>
        <div class="app"><svg viewBox="0 0 96 97"><rect width="96" height="97" rx="22" fill="#050505"/><path d="M32 84C18 56 22 28 54 16c16-4 28 2 32 14-12-8-26-4-32 8-6 14-2 28 8 38" fill="none" stroke="#5fb6d0" stroke-width="5"/><path d="M34 72c-6-24 0-44 22-50 10-2 20 2 24 8-14-6-28 0-34 12-4 10-2 20 4 30" fill="#5fb6d0" opacity=".7"/></svg><i class="dot"></i></div>
        <div class="app"><svg viewBox="0 0 96 97"><rect width="96" height="97" rx="22" fill="url(#g-wa)"/><path d="M12 84l6-20a35 35 0 1 1 12 12z" fill="none" stroke="#f2f7f0" stroke-width="6"/><path d="M34 26c-5 3-6 9-3 15 5 11 14 20 26 24 6 1 10-1 13-6l-10-8-6 4c-6-3-10-8-12-13l5-5-6-12z" fill="#f2f7f0"/></svg><i class="dot"></i><b class="badge wide">24</b></div>
        <i class="dock-sep second"></i>
        <div class="app doc"><svg viewBox="0 0 100 98"><path d="M17 0h42l18 40v60H17z" fill="#e8e8ea"/><rect y="30" width="100" height="68" fill="#fdfdfd" stroke="#bbb"/><rect x="5" y="33" width="90" height="6" fill="#111"/><rect x="5" y="90" width="90" height="5" fill="#333"/><rect x="18" y="42" width="65" height="13" fill="#eef3fb" stroke="#ccd"/><rect x="18" y="58" width="65" height="4" fill="#f5b8c4"/><rect x="18" y="64" width="65" height="4" fill="#f5c8d0"/><rect x="18" y="70" width="65" height="4" fill="#f5b8c4"/><rect x="18" y="76" width="65" height="4" fill="#f5c8d0"/><rect x="18" y="83" width="12" height="4" fill="#b0c8f5"/></svg></div>
        <div class="app trash"><svg viewBox="0 0 86 105"><path d="M0 12c0-14 86-14 86 0l-10 80c-2 18-58 18-62 0z" fill="url(#g-trash)"/><ellipse cx="43" cy="13" rx="41" ry="11" fill="#56585c" stroke="#77797d" stroke-width="1.5"/></svg></div>
    </footer>
</body>

</html>
```

FILE: styles.css
```css
/* base */
* {
    box-sizing: border-box;
}

html,
body {
    margin: 0;
    padding: 0;
}

body {
    position: relative;
    width: 3360px;
    height: 2100px;
    overflow: hidden;
    background: #000;
    font-family: "Inter", "Noto Sans", sans-serif;
    color: #1f2937;
}

.defs {
    position: absolute;
    width: 0;
    height: 0;
}

/* mac menu bar */
.menubar {
    display: flex;
    align-items: center;
    height: 50px;
    padding-bottom: 2px;
    background: #01020a;
    color: #eee;
    font-size: 25.25px;
}

.apple {
    width: 36px;
    height: 36px;
    margin-left: 35px;
    margin-bottom: 2px;
}

.menus {
    display: flex;
    gap: 42px;
    margin-left: 36px;
}

.app-name {
    font-weight: 700;
}

.status {
    display: flex;
    align-items: center;
    gap: 40px;
    margin-left: auto;
    padding-right: 39px;
}

.g18 {
    margin-left: -22px;
}

.g33 {
    margin-left: -7px;
}

.g37 {
    margin-left: -3px;
}

.g38 {
    margin-left: -2px;
}

.g39 {
    margin-left: -1px;
}

.g44 {
    margin-left: 4px;
}

.g48 {
    margin-left: 8px;
}

.status-tile {
    display: flex;
    justify-content: center;
    align-items: center;
    width: 83px;
    height: 48px;
    margin-left: -21px;
    background: #1d1f26;
    border-radius: 0 0 10px 10px;
}

.s-logo {
    width: 32px;
    height: 32px;
    background: #eee;
    border-radius: 8px;
    color: #111;
    font-size: 24px;
    font-weight: 600;
    line-height: 32px;
    text-align: center;
}

.clock {
    margin-left: -6px;
    font-size: 27px;
    white-space: nowrap;
}

/* browser window */
.window {
    display: flex;
    flex-direction: column;
    height: 1888px;
    border-top: 2px solid #5f5f62;
    border-radius: 22px;
    overflow: hidden;
    background: #222226;
}

.tabstrip {
    display: flex;
    align-items: center;
    height: 78px;
    padding-left: 43px;
}

.traffic {
    display: flex;
    gap: 17px;
    margin-right: 25px;
}

.traffic i {
    width: 23px;
    height: 23px;
    border-radius: 50%;
}

.traffic .red {
    background: #ee6a5e;
}

.traffic .amber {
    background: #f5bf4f;
}

.traffic .green {
    background: #61c554;
}

.tabs {
    display: flex;
}

.tab {
    display: flex;
    justify-content: center;
    align-items: center;
    width: 62px;
    height: 32px;
    border-right: 1px solid #46464a;
}

.tab.narrow {
    width: 61px;
}

.tab.last {
    border-right: 0;
}

.tab svg {
    width: 32px;
    height: 32px;
}

.tab-active {
    display: flex;
    justify-content: center;
    align-items: center;
    width: 63px;
    height: 64px;
    margin-left: 4px;
    background: #333338;
    border-radius: 18px;
}

.tab-plus {
    margin-left: 32px;
}

.tab-more {
    margin-left: 120px;
}

.toolbar {
    display: flex;
    align-items: center;
    height: 82px;
    background: #3a3a3f;
}

.nav-back {
    margin-left: 35px;
}

.nav-fwd {
    margin-left: 43px;
}

.nav-reload {
    margin-left: 33px;
}

.nav-mark {
    margin-left: 322px;
}

.urlbar {
    display: flex;
    align-items: center;
    flex: none;
    width: 1572px;
    height: 64px;
    margin-left: 35px;
    margin-top: -2px;
    padding-left: 20px;
    background: #29292d;
    border-radius: 22px;
}

.url {
    margin-left: 32px;
    color: #e6e6ea;
    font-size: 28px;
    letter-spacing: 0.1px;
    white-space: nowrap;
}

.url-tr {
    margin-left: auto;
}

.url-share {
    margin-left: 40px;
}

.url-sep {
    width: 1px;
    height: 32px;
    margin-left: 20px;
    background: #77777c;
}

.url-brave {
    margin-left: 24px;
}

.url-tri {
    margin-left: 34px;
    margin-right: 22px;
}

.extensions {
    display: flex;
    margin-left: auto;
    padding-right: 14px;
}

.ext {
    position: relative;
    display: flex;
    justify-content: center;
    align-items: center;
    width: 60px;
}

.ext-count {
    position: absolute;
    left: 30px;
    top: 18px;
    width: 28px;
    height: 30px;
    background: #5a3fb8;
    border-radius: 12px;
    color: #fff;
    font-size: 18px;
    font-weight: 700;
    line-height: 30px;
    text-align: center;
}

/* admin page */
.page {
    position: relative;
    flex: 1;
    min-height: 0;
    background: #f9fafb;
    color: #1f2937;
}

.card {
    width: 2496px;
    height: 1694px;
    margin-left: 432px;
    padding: 0 48px;
    background: #fff;
    border-radius: 0 0 16px 16px;
    box-shadow: 0 2px 8px rgba(0, 0, 0, 0.08);
}

.upload-stub {
    height: 18px;
    background: #f6f9ff;
    border-bottom: 6px dotted #3b82f6;
    border-left: 6px dotted #3b82f6;
    border-right: 6px dotted #3b82f6;
    border-radius: 0 0 24px 24px;
    box-shadow: 0 10px 20px rgba(59, 130, 246, 0.07);
}

.files {
    height: 1102px;
    margin-top: 64px;
    padding: 47px 48px 0;
    background: #f5f3ff;
    border: 6px dotted #7c5cf5;
    border-radius: 24px;
    box-shadow: 0 10px 24px rgba(124, 92, 245, 0.1);
}

.section-title {
    display: flex;
    align-items: center;
    gap: 10px;
    height: 58px;
    margin: 0 0 30px;
    font-size: 36px;
    font-weight: 600;
    letter-spacing: -0.1px;
    white-space: nowrap;
}

.file-list {
    display: flex;
    flex-direction: column;
    justify-content: flex-end;
    gap: 18px;
    height: 799px;
    overflow: hidden;
}

.file-item {
    display: flex;
    flex: none;
    align-items: center;
    padding: 0 24px;
    border-radius: 12px;
    overflow: hidden;
}

.is-error {
    height: 172px;
    background: #f5eaf4;
    border: 4px dotted #ef4444;
}

.is-running {
    height: 136px;
    background: #f4eff4;
    border: 4px dotted #efa030;
}

.file-icon {
    flex: none;
    width: 48px;
    height: 48px;
    margin-right: 33px;
    margin-bottom: 6px;
}

.spinner {
    fill: #e9a23b;
}

.file-info {
    flex: none;
    width: 31px;
    font-size: 24px;
    line-height: 36px;
    color: #6b7280;
}

.file-name {
    height: 48px;
}

.file-body {
    display: flex;
    flex-direction: column;
    align-items: flex-start;
    min-width: 0;
    padding-top: 6px;
}

.pill-error {
    display: inline-flex;
    align-items: center;
    gap: 9px;
    height: 44px;
    padding: 0 24px;
    background: #f8e3e4;
    border-radius: 16px;
    color: #90231f;
    font-size: 23.5px;
    font-weight: 600;
}

.file-msg {
    margin-top: 8px;
    color: #90231f;
    font-size: 24px;
    line-height: 36px;
    white-space: nowrap;
}

.file-running {
    flex: 1;
}

.running-name {
    font-size: 30.5px;
    font-weight: 600;
    line-height: 44px;
}

.running-size {
    margin-top: 6px;
    color: #6b7280;
    font-size: 24px;
    line-height: 32px;
}

.pill-running {
    display: inline-flex;
    align-items: center;
    gap: 8px;
    height: 52px;
    margin-top: 4px;
    padding: 0 24px;
    background: #fef3c7;
    border: 4px solid #e9a23b;
    border-radius: 16px;
    color: #92400e;
    fill: #92400e;
    font-size: 24px;
    font-weight: 600;
}

.start-btn {
    display: flex;
    align-items: center;
    gap: 9px;
    height: 74px;
    margin-top: 34px;
    padding: 0 31px;
    background: #eff6ff;
    border: 4px solid #4a80ee;
    border-radius: 14px;
    box-shadow: 0 4px 10px rgba(59, 130, 246, 0.15);
    color: #2450d8;
    font-family: inherit;
    font-size: 30px;
    font-weight: 600;
}

.progress-box {
    height: 366px;
    margin-top: 64px;
    padding: 32px;
    background: #f9fafb;
    border-radius: 20px;
}

.progress-box .section-title {
    height: 56px;
    margin-bottom: 31px;
}

.bar {
    height: 60px;
    margin-bottom: 34px;
    background: #e5e7eb;
    border-radius: 16px;
    overflow: hidden;
}

.bar-fill {
    width: 47px;
    height: 100%;
    background: linear-gradient(90deg, #4f86f0, #2f5fe0);
    color: #fff;
    font-size: 30px;
    font-weight: 700;
    line-height: 60px;
    text-align: center;
    white-space: nowrap;
}

.progress-line {
    display: flex;
    align-items: center;
    gap: 8px;
    height: 44px;
    margin: 0 0 33px;
    font-size: 29.6px;
    white-space: nowrap;
}

.stats {
    font-size: 30.2px;
}

.stats b {
    font-weight: 600;
}

.side-widget {
    position: absolute;
    right: 0;
    top: 1275px;
    display: flex;
    justify-content: center;
    align-items: center;
    width: 80px;
    height: 81px;
    background: #fdfdfd;
    border-radius: 14px 0 0 14px;
    box-shadow: 0 0 4px rgba(0, 0, 0, 0.05);
}

/* window behind, wallpaper */
.behind {
    display: flex;
    justify-content: flex-end;
    align-items: center;
    width: 340px;
    height: 74px;
    margin-top: 6px;
    padding-right: 20px;
    overflow: hidden;
    background: #1d1d20;
    border-bottom: 10px solid #333338;
    color: #a4a4a8;
    font-size: 28px;
    white-space: nowrap;
}

.wallpaper {
    position: absolute;
    left: 1997px;
    top: 1938px;
    width: 1363px;
    height: 162px;
}

.flow-row {
    position: absolute;
    left: 1494px;
    top: 2086px;
    display: flex;
    align-items: center;
    height: 40px;
    color: #e8e8e8;
    font-size: 32px;
}

.flow-cell {
    width: 256px;
    height: 40px;
    padding-left: 50px;
    border-left: 1px solid #333;
    border-right: 1px solid #333;
    line-height: 40px;
}

.flow-row span {
    margin-left: 52px;
}

.flow-row i {
    width: 8px;
    height: 8px;
    margin-left: 78px;
    background: #eee;
    border-radius: 50%;
}

/* dock */
.dock {
    position: absolute;
    left: 336px;
    top: 1941px;
    display: flex;
    align-items: flex-start;
    gap: 32px;
    width: 2686px;
    height: 149px;
    padding: 18px 20px 0;
    background: linear-gradient(90deg, #222225 0%, #222225 59%, #2d2b27 63%, #2a2824 100%);
    border: 2px solid #47474a;
    border-top-color: #38383a;
    border-radius: 40px;
    box-shadow: 0 0 60px rgba(0, 0, 0, 0.22);
}

.app {
    position: relative;
    flex: none;
    width: 96px;
}

.app svg {
    display: block;
    width: 96px;
    height: 97px;
}

.dot {
    position: absolute;
    left: 45px;
    top: 118px;
    width: 6px;
    height: 7px;
    background: #a8a8aa;
    border-radius: 50%;
}

.badge {
    position: absolute;
    left: 67px;
    top: -10px;
    width: 44px;
    height: 44px;
    background: #e0503f;
    border-radius: 50%;
    color: #fff;
    font-size: 24px;
    font-weight: 400;
    line-height: 44px;
    text-align: center;
}

.dock-sep {
    flex: none;
    width: 1px;
    height: 110px;
    background: #6a6a6a;
}

.dock-sep.first {
    margin-left: 16px;
    margin-right: 8px;
}

.dock-sep.second {
    margin-left: 14px;
    margin-right: 10px;
}

.doc {
    width: 100px;
    margin-top: -10px;
}

.doc svg {
    width: 100px;
    height: 98px;
}

.trash {
    width: 86px;
    margin-left: 3px;
    margin-top: -10px;
}

.trash svg {
    width: 86px;
    height: 105px;
}
```
